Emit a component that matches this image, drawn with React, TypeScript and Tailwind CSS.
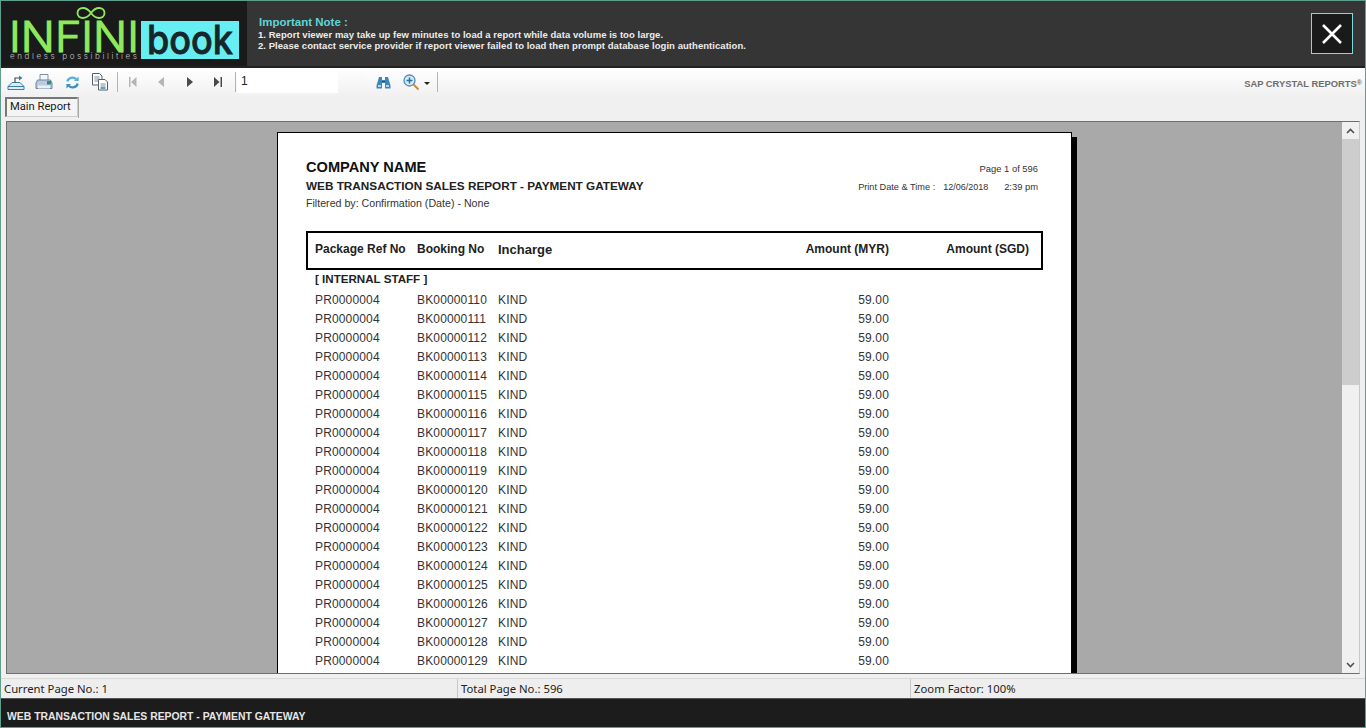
import React from "react";

const rows = Array.from({ length: 20 }, (_, i) => `BK00000${110 + i}`);

function Logo() {
  return (
    <svg width="246" height="66" viewBox="0 0 246 66" className="block">
      <path d="M90 12c-3-4-5.500-5-8-5-3.500 0-5.500 2.300-5.500 5s2 5 5.500 5c2.500 0 5-1 8-5s5.500-5 8-5c3.500 0 5.500 2.300 5.500 5s-2 5-5.500 5c-2.500 0-5-1-8-5z" fill="none" stroke="#8fe95c" strokeWidth="1.800" />
      <text x="8" y="51" textLength="130" lengthAdjust="spacingAndGlyphs" fontFamily="Inter, sans-serif" fontWeight="300" fontSize="42" fill="#8fe95c" stroke="#8fe95c" strokeWidth="1.200">INFINI</text>
      <text x="9" y="58" textLength="127" lengthAdjust="spacing" fontFamily="Inter, sans-serif" fontWeight="300" fontSize="8" fill="#c4c4c4">endless possibilities</text>
      <rect x="140" y="20" width="98" height="38" fill="#66eef2" />
      <text x="146" y="53" textLength="86" lengthAdjust="spacingAndGlyphs" fontFamily="Inter, sans-serif" fontWeight="500" fontSize="40" fill="#16262a" stroke="#16262a" strokeWidth="0.800">book</text>
    </svg>
  );
}

function ExportIcon() {
  return (
    <svg width="18" height="18" viewBox="0 0 18 18" fill="none">
      <path d="M1 13.500 5 9.500h8l4 4v3H1z" fill="#dcecf6" stroke="#3d7ea6" strokeWidth="1" />
      <path d="M1 13.500h16" stroke="#3d7ea6" />
      <path d="M8 9.500V5h5" stroke="#4a4a4a" strokeWidth="1.200" />
      <path d="M12 2.500 15.500 5 12 7.500z" fill="#3d7ea6" />
    </svg>
  );
}
function PrinterIcon() {
  return (
    <svg width="18" height="18" viewBox="0 0 18 18" fill="none">
      <path d="M5 1.500h8v6H5z" fill="#f4f7fa" stroke="#7d94a8" />
      <path d="M2.500 7h13l1.500 3v5.500H1V10z" fill="#b9cbdc" stroke="#6b86a0" />
      <path d="M3 12.500h12v3H3z" fill="#eaf0f5" />
      <rect x="12" y="8" width="4" height="3.500" fill="#2f8f7f" />
    </svg>
  );
}
function RefreshIcon() {
  return (
    <svg width="15" height="15" viewBox="0 0 16 16" fill="none" stroke="#5aaed8" strokeWidth="2.400">
      <path d="M2.500 7a5.500 5 0 0 1 9.500-2.500" />
      <path d="M13.500 9a5.500 5 0 0 1-9.500 2.500" stroke="#3d8fbc" />
      <path d="M14.500 1.500v5h-5z" fill="#5aaed8" stroke="none" />
      <path d="M1.500 14.500v-5h5z" fill="#3d8fbc" stroke="none" />
    </svg>
  );
}
function CopyIcon() {
  return (
    <svg width="18" height="18" viewBox="0 0 18 18" fill="none">
      <path d="M1.500.5h7l2.500 2.500v9h-9.500z" fill="#fff" stroke="#55606a" />
      <path d="M3.500 4h5M3.500 6h5M3.500 8h5" stroke="#7d8c99" />
      <path d="M7.500 6.500h6.500l2.500 2.500v8h-9z" fill="#fff" stroke="#55606a" />
      <path d="M9.500 11h5M9.500 13h5" stroke="#7d8c99" />
      <path d="M9.500 15h5" stroke="#2f83b4" strokeWidth="1.500" />
    </svg>
  );
}
function First({ c }: { c: string }) {
  return (
    <svg width="8" height="10" viewBox="0 0 8 10" fill={c}>
      <rect x="0" y="0" width="1.500" height="10" />
      <path d="M7.500 0v10L2 5z" />
    </svg>
  );
}
function Prev({ c }: { c: string }) {
  return (
    <svg width="6" height="10" viewBox="0 0 6 10" fill={c}>
      <path d="M6 0v10L0 5z" />
    </svg>
  );
}
function Next({ c }: { c: string }) {
  return (
    <svg width="6" height="10" viewBox="0 0 6 10" fill={c}>
      <path d="M0 0v10l6-5z" />
    </svg>
  );
}
function Last({ c }: { c: string }) {
  return (
    <svg width="8" height="10" viewBox="0 0 8 10" fill={c}>
      <path d="M0 0v10l5.500-5z" />
      <rect x="6.500" y="0" width="1.500" height="10" />
    </svg>
  );
}
function Binoculars() {
  return (
    <svg width="15" height="13" viewBox="0 0 15 13" fill="#3f86b8">
      <path d="M3 1h3v3h3V1h3l2.500 8.500v3h-5.500V7H6v5.500H.5v-3z" />
      <path d="M2 9h3v2H2zM10 9h3v2h-3z" fill="#a9d6ef" />
      <path d="M6 5h3v1H6z" fill="#1d4f73" />
    </svg>
  );
}
function ZoomIcon() {
  return (
    <svg width="17" height="17" viewBox="0 0 17 17" fill="none">
      <circle cx="6.500" cy="6.500" r="5.500" fill="#d6eaf7" stroke="#4d8fbd" strokeWidth="1.300" />
      <path d="M6.500 3.500v6M3.500 6.500h6" stroke="#2f6d99" strokeWidth="1.500" />
      <path d="M10.500 10.500 15.500 15.500" stroke="#c98a3c" strokeWidth="2" />
    </svg>
  );
}

function ToolSlot({ w, children }: { w: string; children: React.ReactNode }) {
  return <div className={`flex items-center justify-center shrink-0 ${w}`}>{children}</div>;
}

function Sep() {
  return <div className="w-px h-[20px] bg-[#b4b4b4] shrink-0" />;
}

const font = "font-['Liberation_Sans',Arial,sans-serif]";
const ui = "font-['Noto_Sans',sans-serif]";

export default function App() {
  return (
    <div className={`w-[1366px] h-[728px] overflow-hidden flex flex-col bg-[#5f9f8d] pt-px pb-px px-px ${font}`}>
      {/* header */}
      <header className="h-[67px] shrink-0 flex bg-[#353535] border-b-2 border-[#222222]">
        <div className="w-[246px] bg-[#1a1a1a] shrink-0">
          <Logo />
        </div>
        <div className="flex-1 pl-[11px] pt-[14px]">
          <div className="text-[11.500px] leading-[14px] font-bold text-[#5ed6d6] pl-px">Important Note :</div>
          <div className="text-[9.500px] leading-[11px] font-bold text-[#ececec] tracking-[0.05px]">
            1. Report viewer may take up few minutes to load a report while data volume is too large.
          </div>
          <div className="text-[9.500px] leading-[11px] font-bold text-[#ececec] tracking-[0.05px]">
            2. Please contact service provider if report viewer failed to load then prompt database login authentication.
          </div>
        </div>
        <div className="w-[54px] shrink-0 pt-[12px]">
          <div className="w-[42px] h-[41px] bg-[#1a1a1a] border border-[#7fdcdc] flex items-center justify-center">
            <svg width="20" height="20" viewBox="0 0 20 20" stroke="#ffffff" strokeWidth="2.600">
              <path d="M1 1 19 19M19 1 1 19" />
            </svg>
          </div>
        </div>
      </header>

      {/* toolbar */}
      <div className="h-[29px] shrink-0 flex items-center bg-gradient-to-b from-[#ffffff] to-[#f0f0f0] pl-px pb-px">
        <ToolSlot w="w-[28px]"><ExportIcon /></ToolSlot>
        <ToolSlot w="w-[28px]"><PrinterIcon /></ToolSlot>
        <ToolSlot w="w-[28px]"><RefreshIcon /></ToolSlot>
        <ToolSlot w="w-[28px]"><CopyIcon /></ToolSlot>
        <div className="w-[1px] ml-[3px]"><Sep /></div>
        <ToolSlot w="w-[29px]"><First c="#b5b5b5" /></ToolSlot>
        <ToolSlot w="w-[28px]"><Prev c="#b5b5b5" /></ToolSlot>
        <ToolSlot w="w-[29px]"><Next c="#4a4a4a" /></ToolSlot>
        <ToolSlot w="w-[28px]"><Last c="#4a4a4a" /></ToolSlot>
        <div className="w-[1px] ml-[3px]"><Sep /></div>
        <div className="w-[101px] h-[24px] ml-[1px] -mt-[3px] bg-white text-[#222222] text-[12px] leading-[24px] pl-[4px] shrink-0">1</div>
        <div className="w-[38px] text-[#f8f8f8] text-[12px] pl-[2px] -mt-[3px] shrink-0">/596</div>
        <ToolSlot w="w-[15px]"><Binoculars /></ToolSlot>
        <ToolSlot w="w-[17px] ml-[12px]"><ZoomIcon /></ToolSlot>
        <div className="ml-[4px] w-0 h-0 border-x-[3px] border-x-transparent border-t-[3px] border-t-[#222222] mt-[2px]" />
        <div className="w-[1px] ml-[7px]"><Sep /></div>
        <div className="ml-auto pr-[3px] mt-[4px] text-[9.400px] font-bold text-[#6e6e6e] whitespace-nowrap">
          SAP CRYSTAL REPORTS<span className="text-[7px] align-[2px]">®</span>
        </div>
      </div>

      {/* tab row */}
      <div className="h-[24px] shrink-0 flex items-start bg-[#f0f0f0] pl-[4px]">
        <div className="h-[20px] w-[73px] border-t-2 border-l-2 border-[#777777] border-r border-b border-r-[#cccccc] border-b-[#cccccc] bg-[#f4f4f4] font-['Roboto',sans-serif] text-[11.200px] leading-[15px] text-[#1a1a1a] pl-[3px] whitespace-nowrap">
          Main Report
        </div>
        <div className="w-px h-[21px] bg-[#a8a8a8]" />
      </div>

      {/* report area */}
      <div className="flex-1 min-h-0 flex bg-[#f0f0f0] pl-[5px] pr-[5px]">
        <div className="flex-1 min-w-0 flex border border-[#6e6e6e] border-r-[#c8c8c8] bg-[#a9a9a9]">
          <div className="flex-1 min-w-0 overflow-hidden pt-[10px] pl-[270px]">
            <div className="w-[795px] h-[700px] bg-white border border-black shadow-[5px_5px_0_#000000] text-[#222222] pl-[28px] pr-[28px] pt-[25px]">
              <div className="flex justify-between">
                <div>
                  <div className="text-[14.600px] leading-[18px] font-bold text-[#111111]">COMPANY NAME</div>
                  <div className="text-[11.750px] leading-[19px] font-bold text-[#222222]">WEB TRANSACTION SALES REPORT - PAYMENT GATEWAY</div>
                  <div className="text-[10.650px] leading-[16px] text-[#333333]">Filtered by: Confirmation (Date) - None</div>
                </div>
                <div className="pr-[5px] pt-[4px] text-[9.400px] text-[#333333]">
                  <div className="text-right leading-[13px]">Page 1 of 596</div>
                  <div className="flex items-baseline mt-[5px] leading-[13px]">
                    <span className="w-[85px] text-[9.200px]">Print Date &amp; Time :</span>
                    <span className="w-[61px] text-[9px]">12/06/2018</span>
                    <span>2:39 pm</span>
                  </div>
                </div>
              </div>
              <div className="h-[39px] mt-[20px] border-2 border-black flex items-center pl-[7px] pb-[3px] text-[12px] font-bold text-[#222222]">
                <span className="w-[102px]">Package Ref No</span>
                <span className="w-[81px]">Booking No</span>
                <span className="w-[275px] text-[13px] mt-[1px]">Incharge</span>
                <span className="w-[116px] text-right">Amount (MYR)</span>
                <span className="w-[140px] text-right">Amount (SGD)</span>
              </div>
              <div className="pl-[9px] mt-[1px] text-[11.600px] leading-[15px] font-bold text-[#222222]">[ INTERNAL STAFF ]</div>
              <div className="mt-[4px]">
                {rows.map((b) => (
                  <div key={b} className="flex h-[19px] items-center pl-[9px] text-[12px] text-[#333333] tracking-[0.15px]">
                    <span className="w-[102px]">PR0000004</span>
                    <span className="w-[81px]">{b}</span>
                    <span className="w-[275px]">KIND</span>
                    <span className="w-[116px] text-right">59.00</span>
                  </div>
                ))}
              </div>
            </div>
          </div>
          {/* scrollbar */}
          <div className="w-[17px] shrink-0 flex flex-col bg-[#f0f0f0]">
            <div className="h-[17px] flex items-center justify-center">
              <svg width="9" height="6" viewBox="0 0 9 6" fill="none" stroke="#505050" strokeWidth="1.600"><path d="M1 5 4.500 1.500 8 5" /></svg>
            </div>
            <div className="h-[246px] bg-[#cdcdcd] shrink-0" />
            <div className="flex-1" />
            <div className="h-[17px] flex items-center justify-center">
              <svg width="9" height="6" viewBox="0 0 9 6" fill="none" stroke="#505050" strokeWidth="1.600"><path d="M1 1 4.500 4.500 8 1" /></svg>
            </div>
          </div>
        </div>
      </div>

      {/* status bar */}
      <div className="h-[24px] shrink-0 bg-[#f0f0f0] pt-[4px]">
        <div className={`h-[20px] border-t border-[#d9d9d9] bg-[#eeeeee] flex items-center text-[11.300px] text-[#222222] ${ui}`}>
          <div className="w-[456px] pl-[3px] h-full leading-[19px]">Current Page No.: 1</div>
          <div className="w-[453px] pl-[3px] h-full leading-[19px] border-l border-[#c8c8c8]">Total Page No.: 596</div>
          <div className="flex-1 pl-[3px] h-full leading-[19px] border-l border-[#c8c8c8]">Zoom Factor: 100%</div>
        </div>
      </div>

      {/* footer */}
      <footer className="h-[29px] shrink-0 bg-[#1c1c1c] border-t border-[#555555] flex items-center pl-[6px] pt-[7px] text-[10.400px] font-bold text-[#e6e6e6]">
        WEB TRANSACTION SALES REPORT - PAYMENT GATEWAY
      </footer>
    </div>
  );
}
